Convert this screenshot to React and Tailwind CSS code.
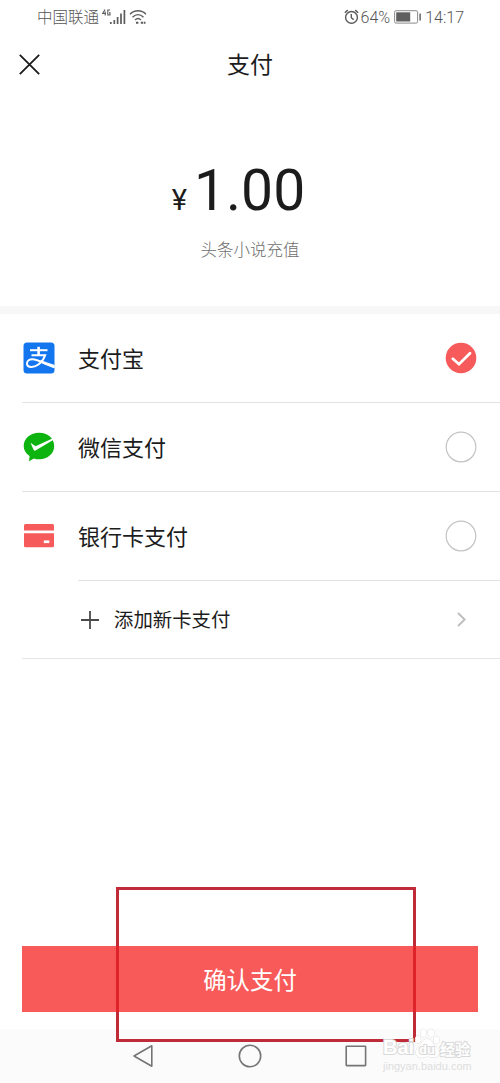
import React, { useState } from 'react';

const SignalIcon = () => (
    <svg width="27" height="18" viewBox="0 0 27 18" fill="none" stroke="#5c5c5c">
        <path d="M4 1.5L1.7 5.5H5M4.2 3.5V7.5M9 2H6.8V7H9V4.7H8" strokeWidth="1.1" />
        <path d="M9.8 14V16M13.3 12V16M16.6 9V16M20 5.5V16M23.4 2V16" strokeWidth="1.7" />
    </svg>
);

const WifiIcon = () => (
    <svg width="18" height="16" viewBox="0 0 18 16" fill="none" stroke="#5c5c5c" strokeWidth="1.4">
        <path d="M1 5.2C5.5 .6 12.5 .6 17 5.2M3.5 8.2C6.8 5 11.2 5 14.5 8.2M6.1 10.9C7.8 9.3 10.2 9.3 11.9 10.9" />
        <path d="M7 13.7H9.8M11.8 13.7H16.5" strokeWidth="2" strokeDasharray="2.4 .7" />
    </svg>
);

const AlarmIcon = () => (
    <svg width="15" height="16" viewBox="0 0 15 16" fill="none" stroke="#5c5c5c" strokeWidth="1.4">
        <circle cx="7.5" cy="8.4" r="5.9" />
        <path d="M.8 3.7L3.8 1.1M14.2 3.7L11.2 1.1M7.3 5V8.7L9.7 10.6" />
    </svg>
);

const BatteryIcon = () => (
    <svg width="28" height="14" viewBox="0 0 28 14">
        <rect x=".6" y=".7" width="23" height="12.4" rx="1.5" fill="#fff" stroke="#8a8a8a" />
        <rect x="2.2" y="2.3" width="14" height="9.2" fill="#5f5f5f" />
        <rect x="25.3" y="3.5" width="1.7" height="7" fill="#777" />
    </svg>
);

const AlipayIcon = () => (
    <svg width="32" height="32" viewBox="0 0 32 32" fill="none">
        <rect x=".5" y=".5" width="31" height="31" rx="3.5" fill="#1476ef" />
        <g stroke="#fff">
            <path d="M7 8.2H24.5" strokeWidth="2" />
            <path d="M15.6 4.8V13" strokeWidth="2.6" />
            <path d="M8.5 13.2H22.2C20.7 17.2 18.2 20.6 15 22.8C11.2 25.4 4 26.3 4 21.4C4 18.7 6.6 17.3 9.4 17.3C14.5 17.3 21 21.3 31.5 25.2" strokeWidth="2" />
            <path d="M17.8 20.5C22 22.4 26 24.2 31.5 25.9V23.1C27 21.7 23 20.2 19.3 18.9Z" fill="#fff" strokeWidth=".3" />
        </g>
    </svg>
);

const WechatPayIcon = () => (
    <svg width="32" height="32" viewBox="0 0 32 32">
        <path d="M16.2 1.8C25 1.8 31.2 7.7 31.2 15S25 28.2 16.2 28.2C14.2 28.2 12.5 28 10.9 27.4L6 30.2L6.6 25C2.8 22.4 .7 19 .7 15C.7 7.7 7.4 1.8 16.2 1.8Z" fill="#0db40f" />
        <path d="M7.5 11.8L12.6 15.3L30.4 7.1L31 8.4L12.5 19.6C11.8 20 11.1 19.8 10.7 19Z" fill="#fff" />
    </svg>
);

const BankCardIcon = () => (
    <svg width="32" height="32" viewBox="0 0 32 32" fill="#f65a5a">
        <path d="M2.5 4H29.5Q31 4 31 5.5V10.5H1V5.5Q1 4 2.5 4Z" />
        <path d="M1 13.3H31V25.8Q31 27.3 29.5 27.3H2.5Q1 27.3 1 25.8Z" />
        <rect x="20.8" y="20.4" width="5.5" height="2.7" fill="#fff" />
    </svg>
);

const Radio = ({ checked }) => (
    <svg width="32" height="32" viewBox="0 0 32 32" fill="none">
        {checked ? (
            <>
                <circle cx="16" cy="16" r="15.3" fill="#f65a5a" />
                <path d="M7.8 16.8L14 22.2L25 11.3" stroke="#fff" strokeWidth="2.8" strokeLinecap="round" />
            </>
        ) : (
            <circle cx="16" cy="16" r="14.8" stroke="#c3c3c3" strokeWidth="1.2" />
        )}
    </svg>
);

const Watermark = () => (
    <div className="absolute left-[383px] top-[1028px] h-[46px] w-[100px]">
        <div className="flex h-[32px] items-end whitespace-nowrap font-['Liberation_Sans'] leading-none text-white [-webkit-text-stroke:2px_#d9d9d9] [paint-order:stroke_fill]">
            <span className="w-[31px] text-[20px] font-bold leading-[26px]">Bai</span>
            <span className="relative flex h-[32px] w-[26px] items-end justify-center">
                <svg className="absolute inset-0" width="26" height="32" viewBox="0 0 26 32" fill="#fff" stroke="#dcdcdc">
                    <ellipse cx="4" cy="11.5" rx="2.7" ry="3.8" />
                    <ellipse cx="9.5" cy="5" rx="3" ry="4" />
                    <ellipse cx="17" cy="5.2" rx="3" ry="4" />
                    <ellipse cx="22.4" cy="12" rx="2.7" ry="3.8" />
                    <path d="M13 11C8 11 8 16 4.5 19C.5 23 1 29 6.5 29.6C10 30 11 28.5 13.3 28.5C16 28.5 18 30 21 29.3C26.5 28 26 22 22 18.8C18 15.5 18 11 13 11Z" />
                </svg>
                <span className="relative text-[13px] font-bold leading-[21px]">du</span>
            </span>
            <span className="font-['Noto_Sans_CJK_SC'] text-[15px] font-bold leading-[22px]">经验</span>
        </div>
        <div className="whitespace-nowrap font-['Liberation_Sans'] text-[11px] leading-[12px] text-[#dedede]">jingyan.baidu.com</div>
    </div>
);

const METHODS = [
    { id: 'alipay', label: '支付宝', Icon: AlipayIcon },
    { id: 'wechat', label: '微信支付', Icon: WechatPayIcon },
    { id: 'card', label: '银行卡支付', Icon: BankCardIcon },
];

const App = () => {
    const [method, setMethod] = useState('alipay');

    return (
        <div className="relative flex h-[1083px] w-[500px] flex-col overflow-hidden bg-white font-[Roboto,'Noto_Sans_CJK_SC',sans-serif] text-[#1c1c1c]">
            {/* Status bar */}
            <div className="flex h-[34px] shrink-0 items-center pl-[37px] pr-[36px] text-[#555]">
                <span className="pt-[4px] text-[15.5px] font-light">中国联通</span>
                <div className="ml-[2px]"><SignalIcon /></div>
                <div className="ml-px"><WifiIcon /></div>
                <div className="ml-auto flex items-center">
                    <AlarmIcon />
                    <span className="ml-[2px] pt-[2px] text-[16px] font-light">64%</span>
                    <div className="ml-[4px]"><BatteryIcon /></div>
                    <span className="ml-[3px] pt-[2px] text-[16px] font-light">14:17</span>
                </div>
            </div>

            {/* Title */}
            <header className="grid h-[60px] shrink-0 grid-cols-3 items-center">
                <button className="pl-[19px]" aria-label="关闭">
                    <svg width="21" height="21" viewBox="0 0 21 21" stroke="#1c1c1c" strokeWidth="1.8">
                        <path d="M.8 .8L20.2 20.2M20.2 .8L.8 20.2" />
                    </svg>
                </button>
                <h1 className="pt-[5px] text-center text-[23px]">支付</h1>
            </header>

            {/* Amount */}
            <section className="flex h-[212px] shrink-0 flex-col items-center pt-[62px]">
                <div className="flex items-baseline pr-[23px]">
                    <span className="text-[29px] leading-none">¥</span>
                    <span className="ml-[7px] text-[57px] leading-[70px]">1.00</span>
                </div>
                <p className="mt-[12px] text-[16.5px] font-light leading-[26px] text-[#6e6e6e]">头条小说充值</p>
            </section>
            <div className="h-[8px] shrink-0 bg-[#f7f7f7]" />

            {/* Payment methods */}
            {METHODS.map(({ id, label, Icon }) => (
                <div key={id} className="flex h-[89px] shrink-0 flex-col pl-[23px]">
                    <button onClick={() => setMethod(id)} className="flex flex-1 items-center pr-[23px]">
                        <Icon />
                        <span className="ml-[23px] pt-[2px] text-[22px]">{label}</span>
                        <span className="ml-auto"><Radio checked={method === id} /></span>
                    </button>
                    <div className={id === 'card' ? 'ml-[55px] h-px bg-[#e2e2e2]' : '-ml-px h-px bg-[#e2e2e2]'} />
                </div>
            ))}
            <div className="ml-[22px] flex h-[78px] shrink-0 items-center border-b border-[#e6e6e6] pl-[59px] pr-[34px]">
                <svg width="18" height="18" viewBox="0 0 18 18" stroke="#4a4a4a" strokeWidth="1.8">
                    <path d="M9 0V18M0 9H18" />
                </svg>
                <span className="ml-[15px] pt-[3px] text-[19.4px]">添加新卡支付</span>
                <svg className="ml-auto" width="9" height="15" viewBox="0 0 9 15" fill="none" stroke="#bcbcbc" strokeWidth="1.8">
                    <path d="M1 1L7.7 7.5L1 14" />
                </svg>
            </div>

            {/* Confirm */}
            <button className="mx-[22px] mb-[17px] mt-auto h-[66px] shrink-0 bg-[#f85a5a] pt-[5px] text-[23.4px] text-white">确认支付</button>

            {/* System navigation */}
            <nav className="flex h-[54px] shrink-0 items-center bg-[#fbfbfb] pl-[132px]">
                <svg width="22" height="24" viewBox="0 0 22 24" fill="none" stroke="#757575" strokeWidth="1.6" strokeLinejoin="round">
                    <path d="M19.8 1.8V22.2L2 12Z" />
                </svg>
                <svg className="ml-[84px]" width="24" height="24" viewBox="0 0 24 24" fill="none" stroke="#757575" strokeWidth="1.6">
                    <circle cx="12" cy="12" r="10.7" />
                </svg>
                <svg className="ml-[83px]" width="22" height="22" viewBox="0 0 22 22" fill="none" stroke="#757575" strokeWidth="1.6">
                    <rect x="1.2" y="1.2" width="19.4" height="19.4" rx=".5" />
                </svg>
            </nav>

            {/* Highlight frame around the confirm button */}
            <div className="pointer-events-none absolute left-[116px] top-[887px] h-[155px] w-[300px] border-3 border-[#c02b38]" />
            <div className="pointer-events-none absolute left-[116px] top-[946px] h-[66px] w-[300px] border-x-3 border-[#e02329]" />
            <Watermark />
        </div>
    );
};

export default App;
